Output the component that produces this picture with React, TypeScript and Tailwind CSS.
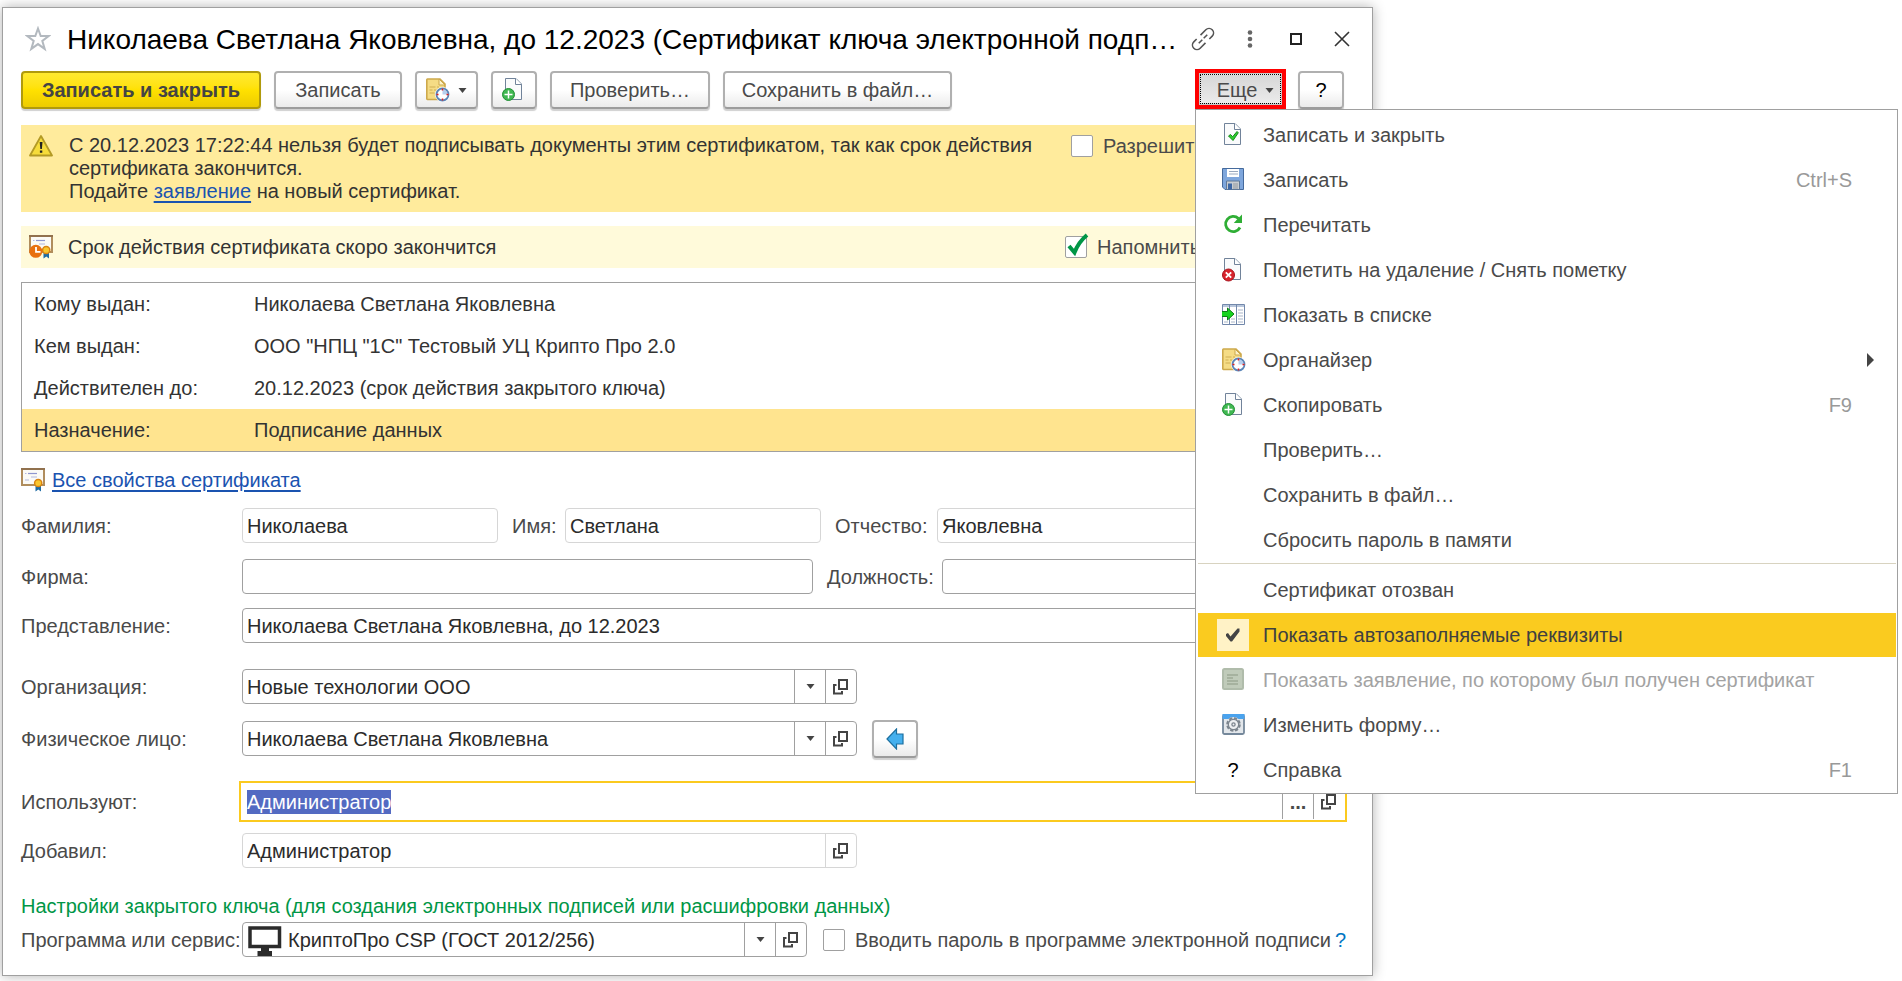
import { useEffect, useRef, type ComponentType, type ReactNode } from 'react';
import clsx from 'clsx';

/* ---------- icons ---------- */

const SaveCloseIcon = () => (
  <svg width="24" height="24" viewBox="0 0 24 24">
    <path d="M2.500 .5h10.500l5.500 5.500v15.500h-16z" fill="#fafbfc" stroke="#71839a" />
    <path d="M12.500 .5v6h6" fill="#fff" stroke="#71839a" />
    <path d="M6.500 13l2-1.500 2.200 2.200 4.300-5.200 1.300 1.300-5.300 7.700z" fill="#2ecc2e" stroke="#128a1c" />
  </svg>
);

const FloppyIcon = () => (
  <svg width="24" height="24" viewBox="0 0 24 24">
    <path d="M.5 .5h21v21H3l-2.500-2.500z" fill="#7ea6dc" stroke="#456a9c" />
    <path d="M5 1h12v8H5z" fill="#fff" />
    <path d="M7 3.500h9M7 6h9" stroke="#9aa9bf" />
    <path d="M4.500 13h13v8.500h-13z" fill="#c9cdd1" stroke="#5f7898" />
    <path d="M6 15.500h4v6H6z" fill="#3d67a5" />
    <path d="M11 15h5v6h-5z" fill="#aeb3b8" />
  </svg>
);

const RefreshIcon = () => (
  <svg width="24" height="24" viewBox="0 0 24 24">
    <path d="M16.500 5.500A7.600 7.600 0 1 0 18 14.500" fill="none" stroke="#2fae35" strokeWidth="2.800" />
    <path d="M20 1.500V10h-8.200l2.700-3z" fill="#2fae35" />
  </svg>
);

const DeleteMarkIcon = () => (
  <svg width="24" height="24" viewBox="0 0 24 24">
    <path d="M2.500 .5h10.500l5.500 5.500v15.500h-16z" fill="#fafbfc" stroke="#71839a" />
    <path d="M12.500 .5v6h6" fill="#fff" stroke="#71839a" />
    <circle cx="6.500" cy="17" r="6" fill="#d8232c" stroke="#a8121b" />
    <path d="M3.800 14.300l5.400 5.400M9.200 14.300l-5.400 5.400" stroke="#fff" strokeWidth="1.800" />
  </svg>
);

const ListIcon = () => (
  <svg width="24" height="24" viewBox="0 0 24 24">
    <path d="M.5 1.500h22v20H.5z" fill="#fff" stroke="#7288ab" />
    <path d="M1 2h21v2H1z" fill="#b9c7dc" />
    <path d="M7.500 2v19.500M14.500 2v19.500" stroke="#7288ab" />
    <path d="M16 7h5M16 10h5M16 13h5M16 16h5M16 19h5M9 16h4M9 19h4M2 19h4" stroke="#a9b5c8" />
    <path d="M-.5 8.500h6V5l6.500 6-6.500 6v-3.500h-6z" fill="#16d41f" stroke="#0c7d16" />
  </svg>
);

const OrganizerIcon = () => (
  <svg width="24" height="24" viewBox="0 0 24 24">
    <path
      d="M1.500 1h12.500l5 5v15.500H1.500A.8.8 0 0 1 .8 20.700V1.800A.8.8 0 0 1 1.500 1z"
      fill="#f5dc85"
      stroke="#cda94c"
      strokeWidth="1.600"
    />
    <path d="M13 1v6h6z" fill="#fdf3c8" stroke="#cda94c" />
    <path d="M3.500 9h6M11 9h2M3.500 12h3M8 12h3M3.500 15h5" stroke="#cfae55" strokeWidth="1.200" />
    <circle cx="16.500" cy="16.500" r="7.500" fill="#fff" />
    <circle cx="16.500" cy="16.500" r="6" fill="#fff" stroke="#5b86b8" strokeWidth="1.800" />
    <path d="M16.500 16.500v-5a5 5 0 0 1 5 5z" fill="#b7cfee" />
    <path d="M16.500 10.500v2M16.500 20.500v2M10.500 16.500h2M20.500 16.500h2" stroke="#e02020" strokeWidth="1.500" />
  </svg>
);

const CopyIcon = () => (
  <svg width="24" height="24" viewBox="0 0 24 24">
    <path d="M3.500 .5h10.500l5.500 5.500v15.500h-16z" fill="#fafbfc" stroke="#71839a" />
    <path d="M13.500 .5v6h6" fill="#fff" stroke="#71839a" />
    <circle cx="6.500" cy="16.500" r="6" fill="#3fb751" stroke="#1f8f33" />
    <path d="M6.500 12.500v8M2.500 16.500h8" stroke="#fff" strokeWidth="1.500" />
  </svg>
);

const CheckIcon = () => (
  <svg width="16" height="16" viewBox="0 0 16 16">
    <path d="M1 7l2-1 2.500 3.500L12.500 1.500H14.500v3L7 14.500H5.500L1 9z" fill="#444" />
  </svg>
);

const StatementIcon = () => (
  <svg width="24" height="24" viewBox="0 0 24 24">
    <rect x="1" y="1" width="20" height="20" rx="1.500" fill="#c0cbba" stroke="#b0bcab" strokeWidth="2" />
    <path d="M5 7h11M5 10h6M5 13h11M5 16h11" stroke="#9dab97" strokeWidth="1.300" />
  </svg>
);

const FormIcon = () => (
  <svg width="24" height="24" viewBox="0 0 24 24">
    <rect x="1" y="2" width="21" height="19" rx="1.500" fill="#e3e7eb" stroke="#75889b" strokeWidth="1.800" />
    <path d="M.5 1h22v5H.5z" fill="#4aa3ee" />
    <circle cx="11.500" cy="11.500" r="7.500" fill="#e3e7eb" />
    <circle cx="11.500" cy="11.500" r="6.300" fill="none" stroke="#7c858e" strokeWidth="2" strokeDasharray="3.200 1.700" />
    <circle cx="11.500" cy="11.500" r="5.200" fill="#eef0f2" stroke="#7c858e" strokeWidth="1.300" />
    <circle cx="11.500" cy="11.500" r="1.600" fill="none" stroke="#7c858e" strokeWidth="1.300" />
  </svg>
);

const WarningIcon = () => (
  <svg width="24" height="24" viewBox="0 0 24 24">
    <path d="M12 2L23 21.500H1z" fill="#f6dc3b" stroke="#b39a25" strokeWidth="1.800" strokeLinejoin="round" />
    <path d="M10.700 8h2.800l-.6 7h-1.600zM10.900 16.500h2.400v2.300h-2.400z" fill="#222" />
  </svg>
);

const CertificateIcon = ({ clock }: { clock?: boolean }) => (
  <svg width="24" height="24" viewBox="0 0 24 24">
    <rect x="1" y="1" width="22" height="16" fill="#fbfaf6" stroke="#b08d5d" strokeWidth="2" />
    <path d="M0 1h24" stroke="#87694a" strokeWidth="1.500" />
    <path d="M7 5.500h9" stroke="#8f96cf" strokeWidth="1.200" />
    <path d="M4 5.500h1.500M4 12h4M10 9h6" stroke="#b3b8dd" strokeWidth="1.200" />
    <path d="M14.500 17h5.500v6.500l-2.700-2-2.800 2z" fill="#1d6ba4" />
    <circle cx="17.200" cy="15" r="3.600" fill="#f9c62e" stroke="#d98412" strokeWidth="1.500" />
    {clock && (
      <>
        <circle cx="6.800" cy="16.300" r="6.500" fill="#e8700f" />
        <path d="M7 12v4.800h4.500" fill="none" stroke="#fff" strokeWidth="1.800" />
      </>
    )}
  </svg>
);

const OpenIcon = () => (
  <svg width="16" height="16" viewBox="0 0 16 16" className="shrink-0">
    <path d="M6 1h8v9H6zM3.500 6H1v8.500h8V12" fill="none" stroke="#444" strokeWidth="2" />
  </svg>
);

const ArrowDown = () => (
  <svg width="9" height="5" viewBox="0 0 9 5" className="shrink-0">
    <path d="M.5 0h8l-4 5z" fill="#444" />
  </svg>
);

const MonitorIcon = () => (
  <svg width="36" height="30" viewBox="0 0 36 30" className="shrink-0">
    <path d="M2 2h29.500v18.500H2z" fill="#fff" stroke="#2b2b2b" strokeWidth="3.500" />
    <path d="M13 22h8v3h3v5H9.500v-5H13z" fill="#2b2b2b" />
  </svg>
);

/* ---------- controls ---------- */

const buttonLook =
  'flex h-[38px] shrink-0 items-center justify-center rounded border-2 border-[#b0b0b0] border-b-[#9c9c9c] bg-linear-to-b from-white from-50% to-[#ebebeb] shadow-[0_2px_1px_#d0d0d0]';

function Button({ className, label, children }: { className: string; label?: string; children: ReactNode }) {
  return (
    <button type="button" aria-label={label} className={clsx(buttonLook, className)}>
      {children}
    </button>
  );
}

interface FieldProps {
  id: string;
  value?: string;
  className?: string;
  readOnly?: boolean;
  icon?: ReactNode;
  children?: ReactNode;
}

function Field({ id, value = '', className, readOnly, icon, children }: FieldProps) {
  return (
    <div
      className={clsx(
        'flex h-[35px] min-w-0 items-stretch overflow-hidden rounded border bg-white',
        readOnly ? 'border-[#d6d6d6]' : 'border-[#a0a0a0]',
        className,
      )}
    >
      {icon}
      <input id={id} defaultValue={value} readOnly={readOnly} className="min-w-0 flex-1 pl-1 text-[#2b2b2b] outline-none" />
      {children}
    </div>
  );
}

function FieldButton({ label, light, children }: { label: string; light?: boolean; children: ReactNode }) {
  return (
    <button
      type="button"
      aria-label={label}
      className={clsx('flex w-[31px] shrink-0 items-center justify-center border-l', light ? 'border-[#d6d6d6]' : 'border-[#a0a0a0]')}
    >
      {children}
    </button>
  );
}

function Label({ htmlFor, children }: { htmlFor: string; children: ReactNode }) {
  return (
    <label htmlFor={htmlFor} className="w-[221px] shrink-0 whitespace-nowrap">
      {children}
    </label>
  );
}

function Checkbox({ id, label, checked, className }: { id: string; label: string; checked?: boolean; className?: string }) {
  return (
    <div className={clsx('flex items-center gap-2.5 whitespace-nowrap', className)}>
      <span className="relative flex">
        <input
          id={id}
          type="checkbox"
          defaultChecked={checked}
          className="size-[22px] appearance-none rounded-xs border border-[#a0a0a0] bg-white"
        />
        {checked && (
          <svg width="26" height="26" viewBox="0 0 26 26" className="pointer-events-none absolute -top-1 left-0">
            <path d="M4 14l5.500 6.500C12 14 16 8 22 3" fill="none" stroke="#009646" strokeWidth="4" />
          </svg>
        )}
      </span>
      <label htmlFor={id}>{label}</label>
    </div>
  );
}

/* ---------- "Еще" menu ---------- */

interface MenuEntry {
  label: string;
  icon?: ComponentType;
  hotkey?: string;
  submenu?: boolean;
  checked?: boolean;
  disabled?: boolean;
}

const QuestionIcon = () => <span className="w-[22px] text-center text-black">?</span>;

const objectCommands: MenuEntry[] = [
  { label: 'Записать и закрыть', icon: SaveCloseIcon },
  { label: 'Записать', icon: FloppyIcon, hotkey: 'Ctrl+S' },
  { label: 'Перечитать', icon: RefreshIcon },
  { label: 'Пометить на удаление / Снять пометку', icon: DeleteMarkIcon },
  { label: 'Показать в списке', icon: ListIcon },
  { label: 'Органайзер', icon: OrganizerIcon, submenu: true },
  { label: 'Скопировать', icon: CopyIcon, hotkey: 'F9' },
  { label: 'Проверить…' },
  { label: 'Сохранить в файл…' },
  { label: 'Сбросить пароль в памяти' },
];

const formCommands: MenuEntry[] = [
  { label: 'Сертификат отозван' },
  { label: 'Показать автозаполняемые реквизиты', checked: true },
  { label: 'Показать заявление, по которому был получен сертификат', icon: StatementIcon, disabled: true },
  { label: 'Изменить форму…', icon: FormIcon },
  { label: 'Справка', icon: QuestionIcon, hotkey: 'F1' },
];

function MenuItem({ label, icon: Icon, hotkey, submenu, checked, disabled }: MenuEntry) {
  return (
    <button
      type="button"
      role={checked ? 'menuitemcheckbox' : 'menuitem'}
      aria-checked={checked}
      disabled={disabled}
      className={clsx(
        'mb-px flex h-11 w-full items-center text-left whitespace-nowrap',
        checked && 'bg-[#facb1f] text-[#404040]',
        disabled && 'text-[#a3a3a3]',
      )}
    >
      <span className="flex w-[65px] shrink-0 items-center pl-6">
        {Icon && <Icon />}
        {checked && (
          <span className="-ml-[5px] flex size-8 items-center justify-center bg-[#fff2c6]">
            <CheckIcon />
          </span>
        )}
      </span>
      <span className="flex-1">{label}</span>
      {hotkey && <span className="pr-11 text-[#999]">{hotkey}</span>}
      {submenu && (
        <svg width="7" height="14" viewBox="0 0 7 14" className="mr-[22px]">
          <path d="M0 0l7 7-7 7z" fill="#444" />
        </svg>
      )}
    </button>
  );
}

function MoreMenu() {
  return (
    <div role="menu" className="absolute top-full left-0 z-10 w-[703px] border border-[#a0a0a0] bg-white pt-[3px] pr-px pl-0.5">
      {objectCommands.map((item) => (
        <MenuItem key={item.label} {...item} />
      ))}
      <hr className="mt-px mb-1 border-[#d8d3c0]" />
      {formCommands.map((item) => (
        <MenuItem key={item.label} {...item} />
      ))}
    </div>
  );
}

/* ---------- window ---------- */

const details = [
  ['Кому выдан:', 'Николаева Светлана Яковлевна'],
  ['Кем выдан:', 'ООО "НПЦ "1С" Тестовый УЦ Крипто Про 2.0'],
  ['Действителен до:', '20.12.2023 (срок действия закрытого ключа)'],
  ['Назначение:', 'Подписание данных'],
];

function TitleBar() {
  return (
    <header className="flex h-[63px] items-center pr-[7px] pb-0.5 pl-[22px] text-black">
      <button type="button" aria-label="Добавить в избранное">
        <svg width="26" height="26" viewBox="0 0 26 26">
          <path
            d="M13 2.500l2.700 7.500h8l-6.400 4.900 2.400 8-6.700-4.800-6.700 4.800 2.400-8L2.300 10h8z"
            fill="none"
            stroke="#b3b9bf"
            strokeWidth="2"
          />
        </svg>
      </button>
      <h1 className="ml-4 flex-1 pt-0.5 text-[28px] whitespace-nowrap">
        Николаева Светлана Яковлевна, до 12.2023 (Сертификат ключа электронной подп…
      </h1>
      <button type="button" aria-label="Получить ссылку" className="flex w-[46px] shrink-0 justify-center pr-0.5">
        <svg width="26" height="26" viewBox="0 0 26 26" fill="none" stroke="#555" strokeWidth="1.600">
          <g transform="translate(13 13) rotate(-45)">
            <path d="M1-4.500h7.500a4.500 4.500 0 0 1 0 9H4.500" />
            <path d="M-1 4.500h-7.500a4.500 4.500 0 0 1 0-9h4" />
            <path d="M-6 0H-1M1 0h5" />
          </g>
        </svg>
      </button>
      <button type="button" aria-label="Меню окна" className="flex w-[46px] shrink-0 justify-center">
        <svg width="6" height="18" viewBox="0 0 6 18" fill="#666">
          <circle cx="3" cy="2.500" r="2.300" />
          <circle cx="3" cy="9" r="2.300" />
          <circle cx="3" cy="15.500" r="2.300" />
        </svg>
      </button>
      <button type="button" aria-label="Развернуть" className="flex w-[46px] shrink-0 justify-center">
        <svg width="14" height="14" viewBox="0 0 14 14">
          <path d="M2 2h10v10H2z" fill="none" stroke="#222" strokeWidth="2" />
        </svg>
      </button>
      <button type="button" aria-label="Закрыть" className="flex w-[46px] shrink-0 justify-center">
        <svg width="16" height="16" viewBox="0 0 16 16">
          <path d="M1 1l14 14M15 1L1 15" stroke="#333" strokeWidth="1.600" />
        </svg>
      </button>
    </header>
  );
}

function Toolbar() {
  return (
    <div className="flex">
      <button
        type="button"
        className="h-[38px] w-[240px] rounded border-2 border-[#b09a0c] bg-linear-to-b from-[#ffe92e] via-[#ffe100] to-[#edcc00] font-bold text-[#444] shadow-[0_2px_1px_#d0d0d0]"
      >
        Записать и закрыть
      </button>
      <Button className="ml-[13px] w-32">Записать</Button>
      <Button className="ml-[13px] w-[63px] gap-2" label="Органайзер">
        <OrganizerIcon />
        <ArrowDown />
      </Button>
      <Button className="ml-[13px] w-[46px]" label="Скопировать">
        <CopyIcon />
      </Button>
      <Button className="ml-[13px] w-40">Проверить…</Button>
      <Button className="ml-[13px] w-[229px]">Сохранить в файл…</Button>
      <div className="relative -mt-0.5 mr-3 ml-auto">
        <button
          type="button"
          aria-haspopup="menu"
          aria-expanded="true"
          className="h-10 w-[91px] border-4 border-[#fe0000] bg-[#c9c9c9] p-px"
        >
          <span className="flex size-full items-center justify-center gap-2 border border-dotted border-black bg-linear-to-b from-[#d6d6d6] to-[#ebebeb] pt-0.5 pl-2.5">
            Еще
            <ArrowDown />
          </span>
        </button>
        <MoreMenu />
      </div>
      <Button className="w-[46px] text-black">?</Button>
    </div>
  );
}

export default function App() {
  const usersRef = useRef<HTMLInputElement>(null);

  useEffect(() => {
    usersRef.current?.focus();
    usersRef.current?.select();
  }, []);

  return (
    <div className="overflow-hidden bg-white pt-[7px] pr-[529px] pb-[5px] pl-0.5 font-['Liberation_Sans',Arial,sans-serif] text-[20px] leading-6 text-[#4a4a4a]">
      <main className="border border-[#a0a0a0] bg-white shadow-[0_0_12px_rgba(0,0,0,0.3)]">
        <TitleBar />
        <div className="pr-7 pb-[18px] pl-[18px]">
          <Toolbar />

          <section className="mt-4 flex h-[87px] bg-[#ffeb9c] pt-[9px] pl-2">
            <WarningIcon />
            <p className="ml-4 flex-1 leading-[23px] whitespace-nowrap text-[#333]">
              С 20.12.2023 17:22:44 нельзя будет подписывать документы этим сертификатом, так как срок действия
              <br />
              сертификата закончится.
              <br />
              Подайте{' '}
              <a href="#request" className="text-[#1a53b0] underline underline-offset-3">
                заявление
              </a>{' '}
              на новый сертификат.
            </p>
            <Checkbox id="allow" label="Разрешить" className="h-6 w-[273px]" />
          </section>

          <section className="mt-3.5 flex h-[42px] items-center bg-[#fffada] pl-2">
            <CertificateIcon clock />
            <p className="ml-[15px] flex-1 text-[#333]">Срок действия сертификата скоро закончится</p>
            <Checkbox id="remind" label="Напомнить" checked className="w-[279px]" />
          </section>

          <table className="mt-3.5 w-full border-separate border-spacing-0 border border-[#a0a0a0] text-[#333]">
            <tbody>
              {details.map(([name, value], i) => (
                <tr key={name} className={clsx('h-[42px]', i === 3 && 'bg-[#ffe48f]')}>
                  <th scope="row" className="w-[232px] pl-3 text-left font-normal">
                    {name}
                  </th>
                  <td>{value}</td>
                </tr>
              ))}
            </tbody>
          </table>

          <div className="flex h-14 items-center gap-[7px]">
            <CertificateIcon />
            <a href="#properties" className="text-[#1a53b0] underline underline-offset-3">
              Все свойства сертификата
            </a>
          </div>

          <div className="flex items-center">
            <Label htmlFor="surname">Фамилия:</Label>
            <Field id="surname" value="Николаева" readOnly className="w-64" />
            <label htmlFor="name" className="ml-3.5 w-[53px]">
              Имя:
            </label>
            <Field id="name" value="Светлана" readOnly className="w-64" />
            <label htmlFor="patronymic" className="ml-3.5 w-[102px]">
              Отчество:
            </label>
            <Field id="patronymic" value="Яковлевна" readOnly className="flex-1" />
          </div>

          <div className="mt-4 flex items-center">
            <Label htmlFor="firm">Фирма:</Label>
            <Field id="firm" className="w-[571px]" />
            <label htmlFor="position" className="ml-3.5 w-[115px]">
              Должность:
            </label>
            <Field id="position" className="flex-1" />
          </div>

          <div className="mt-3.5 flex items-center">
            <Label htmlFor="presentation">Представление:</Label>
            <Field id="presentation" value="Николаева Светлана Яковлевна, до 12.2023" className="flex-1" />
          </div>

          <div className="mt-[26px] flex items-center">
            <Label htmlFor="organization">Организация:</Label>
            <Field id="organization" value="Новые технологии ООО" className="w-[615px]">
              <FieldButton label="Выбрать организацию">
                <ArrowDown />
              </FieldButton>
              <FieldButton label="Открыть организацию">
                <OpenIcon />
              </FieldButton>
            </Field>
          </div>

          <div className="mt-[17px] flex h-[35px] items-center">
            <Label htmlFor="person">Физическое лицо:</Label>
            <Field id="person" value="Николаева Светлана Яковлевна" className="w-[615px]">
              <FieldButton label="Выбрать физическое лицо">
                <ArrowDown />
              </FieldButton>
              <FieldButton label="Открыть физическое лицо">
                <OpenIcon />
              </FieldButton>
            </Field>
            <Button className="ml-[15px] w-[46px]" label="Заполнить из сертификата">
              <svg width="18" height="22" viewBox="0 0 18 22">
                <path d="M1 11L10.500 1v5H17v10h-6.500v5z" fill="#45b0ee" stroke="#1c6f9f" strokeWidth="1.200" />
              </svg>
            </Button>
          </div>

          <div className="mt-7 flex items-center">
            <Label htmlFor="users">Используют:</Label>
            <div className="flex h-[35px] flex-1 items-stretch bg-white outline-2 outline-offset-1 outline-[#fbca1f]">
              <input
                ref={usersRef}
                id="users"
                defaultValue="Администратор"
                className="min-w-0 flex-1 pl-[5px] text-[#2b2b2b] outline-none selection:bg-[#536ac2] selection:text-white"
              />
              <FieldButton label="Выбрать пользователей">
                <span className="font-bold">...</span>
              </FieldButton>
              <FieldButton label="Открыть список пользователей">
                <OpenIcon />
              </FieldButton>
            </div>
          </div>

          <div className="mt-3.5 flex items-center">
            <Label htmlFor="author">Добавил:</Label>
            <Field id="author" value="Администратор" readOnly className="w-[615px]">
              <FieldButton label="Открыть автора" light>
                <OpenIcon />
              </FieldButton>
            </Field>
          </div>

          <h2 className="mt-[26px] mb-1 text-[#009646]">
            Настройки закрытого ключа (для создания электронных подписей или расшифровки данных)
          </h2>

          <div className="flex items-center">
            <Label htmlFor="program">Программа или сервис:</Label>
            <Field
              id="program"
              value="КриптоПро CSP (ГОСТ 2012/256)"
              className="w-[565px] shrink-0"
              icon={
                <span className="flex items-end pl-[5px]">
                  <MonitorIcon />
                </span>
              }
            >
              <FieldButton label="Выбрать программу">
                <ArrowDown />
              </FieldButton>
              <FieldButton label="Открыть программу">
                <OpenIcon />
              </FieldButton>
            </Field>
            <Checkbox id="ask-password" label="Вводить пароль в программе электронной подписи" className="ml-4" />
            <button type="button" className="ml-1 text-[#0075c2]">
              ?
            </button>
          </div>
        </div>
      </main>
    </div>
  );
}
